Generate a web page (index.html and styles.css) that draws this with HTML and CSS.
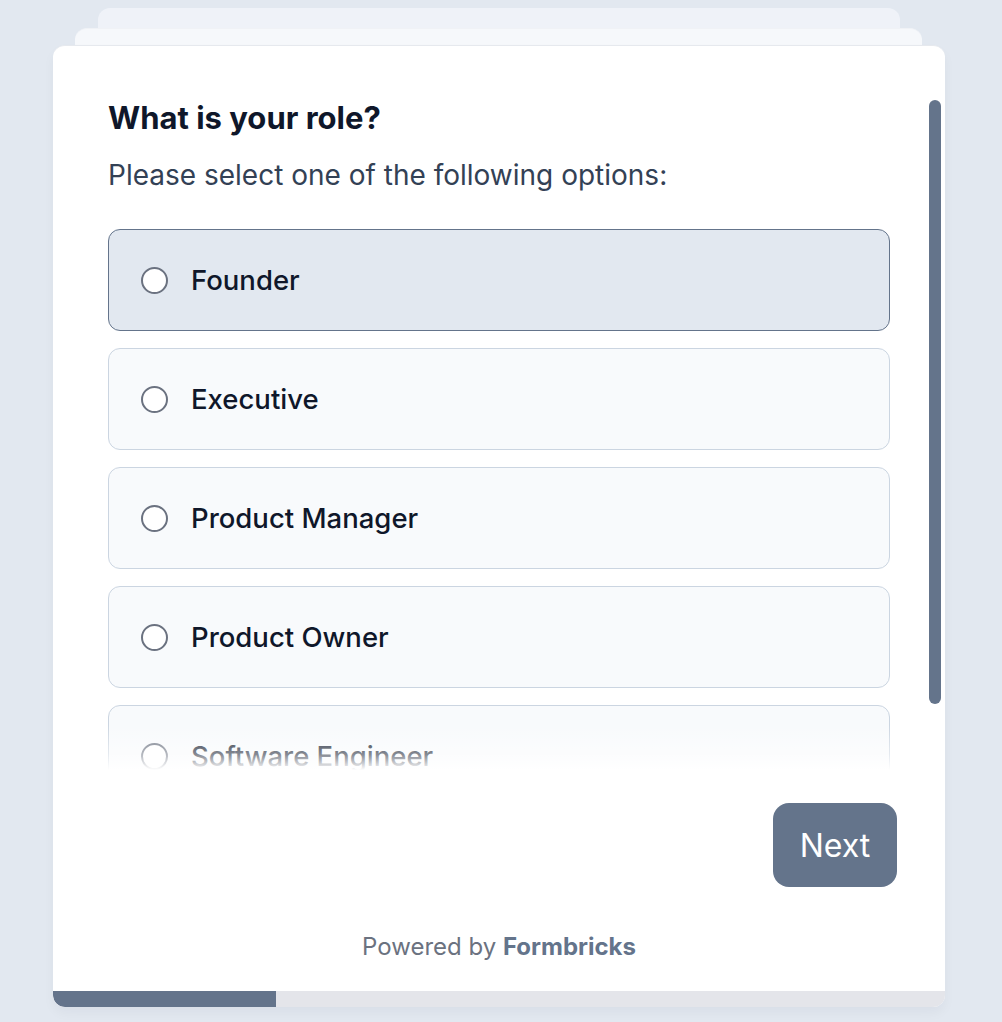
FILE: index.html
```html
<!DOCTYPE html>
<html lang="en">
<head>
<meta charset="utf-8">
<title>What is your role?</title>
<link rel="stylesheet" href="styles.css">
</head>
<body>
<div class="stage">
  <div class="card-back back-1"></div>
  <div class="card-back back-2"></div>
  <div class="card">
    <div class="scroll">
      <div class="content">
        <h1 class="title">What is your role?</h1>
        <p class="subtitle">Please select one of the following options:</p>
        <div class="options">
          <label class="option selected"><span class="radio"></span><span class="label">Founder</span></label>
          <label class="option"><span class="radio"></span><span class="label">Executive</span></label>
          <label class="option"><span class="radio"></span><span class="label">Product Manager</span></label>
          <label class="option"><span class="radio"></span><span class="label">Product Owner</span></label>
          <label class="option"><span class="radio"></span><span class="label">Software Engineer</span></label>
        </div>
      </div>
      <div class="fade"></div>
    </div>
    <div class="thumb"></div>
    <div class="actions"><button class="next">Next</button></div>
    <div class="powered">Powered by <b>Formbricks</b></div>
    <div class="progress"><div class="bar" style="width:25%"></div></div>
  </div>
</div>
</body>
</html>
```
FILE: styles.css
```css
* { box-sizing: border-box; }
html, body { margin: 0; padding: 0; }
body {
  background: #e2e8f0;
  font-family: Inter, "Noto Sans", sans-serif;
  width: 1002px;
  height: 1022px;
  overflow: hidden;
}
.stage {
  position: relative;
  padding: 45px 0 0 53px;
}
.card-back {
  position: absolute;
  border-radius: 12px;
}
.back-1 {
  left: 98px;
  top: 8px;
  width: 802px;
  height: 100px;
  background: #eff2f8;
}
.back-2 {
  left: 75px;
  top: 28px;
  width: 847px;
  height: 100px;
  background: #f6f8fb;
  border-top: 1px solid #f0f2f6;
}
.card {
  position: relative;
  width: 892px;
  height: 962px;
  background: #ffffff;
  border-radius: 12px;
  overflow: hidden;
  display: flex;
  flex-direction: column;
  border-top: 1px solid #e6e9ee;
  box-shadow: 0 6px 12px rgba(15, 23, 42, 0.04);
}
.scroll {
  position: relative;
  height: 727px;
  overflow: hidden;
  flex: none;
}
.content {
  padding: 53px 55px 0 55px;
}
.title {
  margin: 0;
  font-size: 31px;
  line-height: 38px;
  font-weight: 700;
  color: #0f172a;
}
.subtitle {
  margin: 21px 0 0 0;
  font-size: 28px;
  line-height: 34px;
  font-weight: 400;
  color: #334155;
}
.options {
  margin-top: 37px;
  display: flex;
  flex-direction: column;
  gap: 17px;
}
.option {
  display: flex;
  align-items: center;
  height: 102px;
  padding-left: 32px;
  border: 1.5px solid #cbd5e1;
  border-radius: 12px;
  background: #f8fafc;
}
.option.selected {
  background: #e2e8f0;
  border-color: #64748b;
}
.radio {
  width: 27px;
  height: 27px;
  border-radius: 50%;
  border: 2px solid #6b7280;
  background: #ffffff;
  flex: none;
}
.label {
  margin-left: 23px;
  font-size: 27.5px;
  font-weight: 500;
  color: #0f172a;
}
.fade {
  position: absolute;
  left: 0;
  right: 0;
  bottom: 0;
  height: 48px;
  background: linear-gradient(to bottom, rgba(255,255,255,0) 0%, rgba(255,255,255,0.5) 62%, #ffffff 94%);
}
.thumb {
  position: absolute;
  left: 876px;
  top: 54px;
  width: 12px;
  height: 604px;
  border-radius: 6px;
  background: #64748b;
}
.actions {
  display: flex;
  justify-content: flex-end;
  padding: 30px 48px 0 0;
}
.next {
  width: 124px;
  height: 84px;
  border: none;
  border-radius: 16px;
  background: #64748b;
  color: #ffffff;
  font-family: Inter, "Noto Sans", sans-serif;
  font-size: 32px;
  font-weight: 400;
  padding: 0;
}
.powered {
  margin-top: 44px;
  text-align: center;
  font-size: 24px;
  line-height: 32px;
  color: #6b7280;
}
.powered b {
  color: #64748b;
  font-weight: 700;
}
.progress {
  margin-top: auto;
  height: 16px;
  background: #e4e5ea;
  flex: none;
}
.bar {
  height: 100%;
  background: #64748b;
  border-bottom-left-radius: 12px;
}
```
